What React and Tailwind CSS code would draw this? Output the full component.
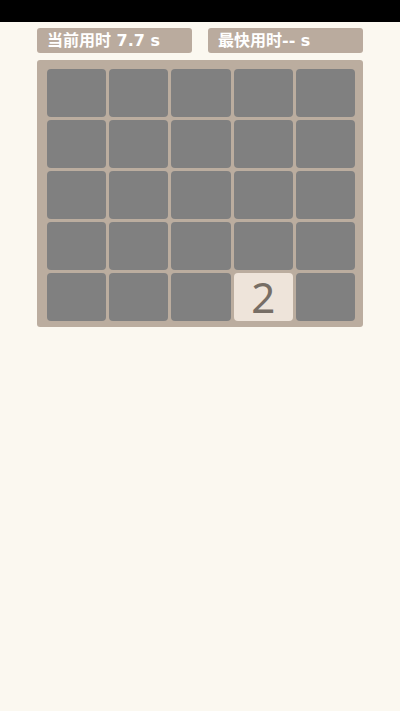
import React from 'react';

const board = [
  [0, 0, 0, 0, 0],
  [0, 0, 0, 0, 0],
  [0, 0, 0, 0, 0],
  [0, 0, 0, 0, 0],
  [0, 0, 0, 2, 0],
];

function Tile({ value }) {
  if (!value) {
    return <div className="h-[48px] rounded-[4px] bg-[#808080]" />;
  }
  return (
    <div className="h-[48px] rounded-[4px] bg-[#eee4da] flex items-center justify-center text-[42px] leading-none text-[#776e65]">
      {value}
    </div>
  );
}

export default function App() {
  return (
    <div
      className="min-h-[711px] bg-[#fbf8f0]"
      style={{ fontFamily: '"Noto Sans", "Noto Sans CJK SC", sans-serif' }}
    >
      {/* status bar */}
      <div className="h-[22px] bg-black" />

      <div className="w-[326px] mx-auto pt-[6px]">
        {/* timers */}
        <div className="flex gap-[16px] font-['DejaVu_Sans','Noto_Sans_CJK_SC',sans-serif]">
          <div className="flex-1 h-[25px] rounded-[3px] bg-[#baab9e] pl-[10px] flex items-center text-white font-bold text-[16px] leading-none">
            当前用时 7.7 s
          </div>
          <div className="flex-1 h-[25px] rounded-[3px] bg-[#baab9e] pl-[10px] flex items-center text-white font-bold text-[16px] leading-none">
            最快用时-- s
          </div>
        </div>

        {/* board */}
        <div className="mt-[7px] rounded-[3px] bg-[#bbad9f] pl-[10px] pr-[8px] pt-[9px] pb-[6px] grid grid-cols-5 gap-[3px]">
          {board.flat().map((v, i) => (
            <Tile key={i} value={v} />
          ))}
        </div>
      </div>
    </div>
  );
}
